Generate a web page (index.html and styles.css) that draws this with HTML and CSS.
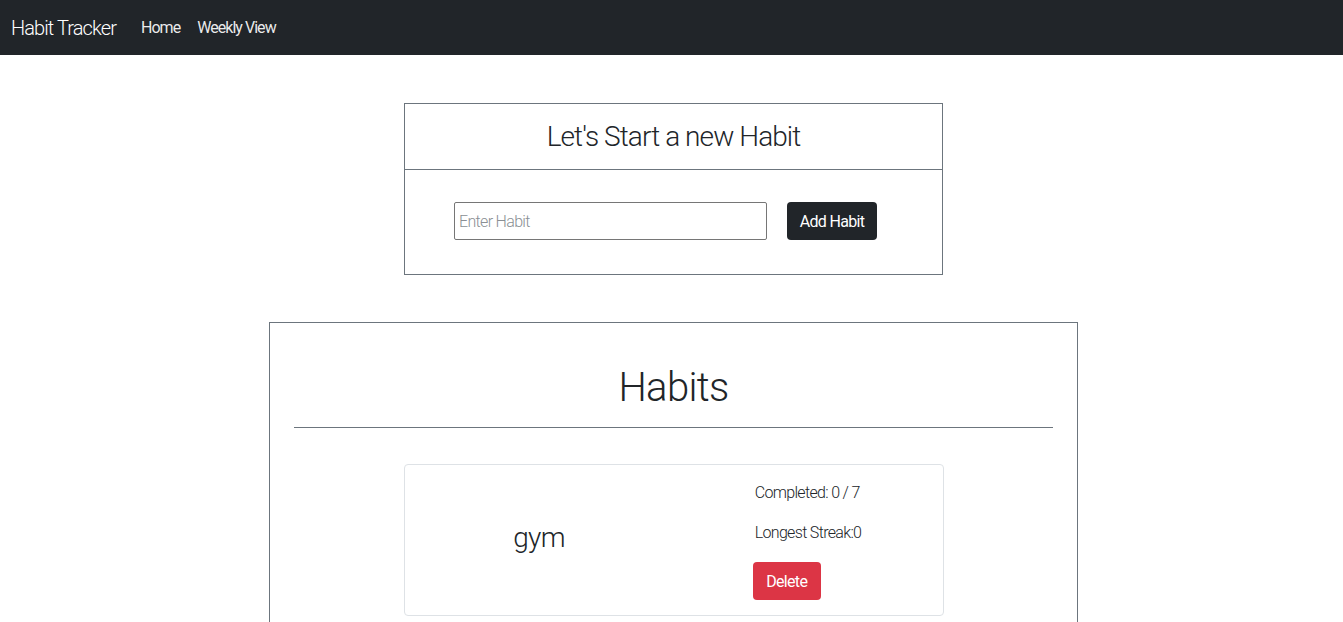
FILE: index.html
```html
<!DOCTYPE html>
<html lang="en">
<head>
<meta charset="utf-8">
<title>Habit Tracker</title>
<link rel="stylesheet" href="styles.css">
</head>
<body>
<nav class="navbar">
  <a class="brand" href="#">Habit Tracker</a>
  <a class="nav-link" href="#">Home</a>
  <a class="nav-link" href="#">Weekly View</a>
</nav>
<main class="main">
  <section class="new-card">
    <h3 class="new-title">Let's Start a new Habit</h3>
    <form class="new-form">
      <input class="habit-input" type="text" placeholder="Enter Habit">
      <button class="btn btn-dark" type="button">Add Habit</button>
    </form>
  </section>
  <section class="habits-card">
    <h1 class="habits-title">Habits</h1>
    <hr class="divider">
    <div class="habit-item">
      <div class="habit-name">gym</div>
      <div class="habit-stats">
        <div class="stats-inner">
          <p class="stat">Completed: 0 / 7</p>
          <p class="stat">Longest Streak:0</p>
          <button class="btn btn-danger" type="button">Delete</button>
        </div>
      </div>
    </div>
  </section>
</main>
</body>
</html>
```
FILE: styles.css
```css
* { box-sizing: border-box; }
html, body { margin: 0; padding: 0; }
body {
  font-family: Roboto, "Noto Sans", sans-serif;
  font-weight: 300;
  letter-spacing: -0.042em;
  color: #212529;
  background: #fff;
  font-size: 16px;
  line-height: 1.5;
  overflow: hidden;
}
.navbar {
  height: 55px;
  background: #212529;
  display: flex;
  align-items: center;
  padding: 0 11px;
}
.brand {
  color: #fff;
  font-size: 20px;
  text-decoration: none;
  margin-right: 25px;
  font-weight: 300;
  letter-spacing: -0.045em;
}
.nav-link {
  color: rgba(255,255,255,0.92);
  text-decoration: none;
  font-size: 16px;
  margin-right: 17px;
  font-weight: 400;
  letter-spacing: -0.06em;
}
.main {
  display: flex;
  flex-direction: column;
  align-items: center;
  padding-top: 48px;
  padding-left: 4px;
}
.new-card {
  width: 539px;
  border: 1px solid #6c757d;
}
.new-title {
  margin: 0;
  height: 66px;
  display: flex;
  align-items: center;
  justify-content: center;
  font-size: 28px;
  font-weight: 300;
  letter-spacing: -0.033em;
  border-bottom: 1px solid #6c757d;
}
.new-form {
  display: flex;
  align-items: center;
  padding: 32px 0 34px 49px;
  gap: 20px;
}
.habit-input {
  width: 313px;
  height: 38px;
  border: 1px solid #767676;
  border-radius: 2px;
  font-family: inherit;
  font-weight: 300;
  font-size: 16px;
  letter-spacing: inherit;
  padding: 0 4px;
  color: #212529;
}
.habit-input::placeholder { color: #8a8f94; }
.btn {
  font-family: inherit;
  font-weight: 400;
  font-size: 16px;
  letter-spacing: inherit;
  height: 38px;
  border: none;
  border-radius: 4px;
  color: #fff;
  padding: 0 12px;
  white-space: nowrap;
}
.btn-dark { background: #212529; width: 90px; }
.btn-danger { background: #dc3545; width: 68px; margin-left: -2px; }
.habits-card {
  width: 809px;
  margin-top: 47px;
  border: 1px solid #6c757d;
  padding: 0 24px 40px;
}
.habits-title {
  margin: 0;
  padding-top: 41px;
  height: 104px;
  text-align: center;
  font-size: 40px;
  font-weight: 300;
  line-height: 1.2;
}
.divider {
  margin: 0 0 36px;
  border: 0;
  border-top: 1px solid #6c757d;
}
.habit-item {
  width: 540px;
  margin: 0 auto;
  border: 1px solid #dee2e6;
  border-radius: 4px;
  display: flex;
  height: 152px;
}
.habit-name {
  flex: 1;
  display: flex;
  align-items: center;
  justify-content: center;
  font-size: 28px;
  font-weight: 300;
  padding-bottom: 4px;
}
.habit-stats {
  flex: 1;
  display: flex;
  justify-content: center;
  padding-top: 16px;
}
.stats-inner {
  display: flex;
  flex-direction: column;
  align-items: flex-start;
}
.stat {
  margin: 0 0 16px;
  font-size: 16px;
}
.stat + .btn { margin-top: 1px; }
```
